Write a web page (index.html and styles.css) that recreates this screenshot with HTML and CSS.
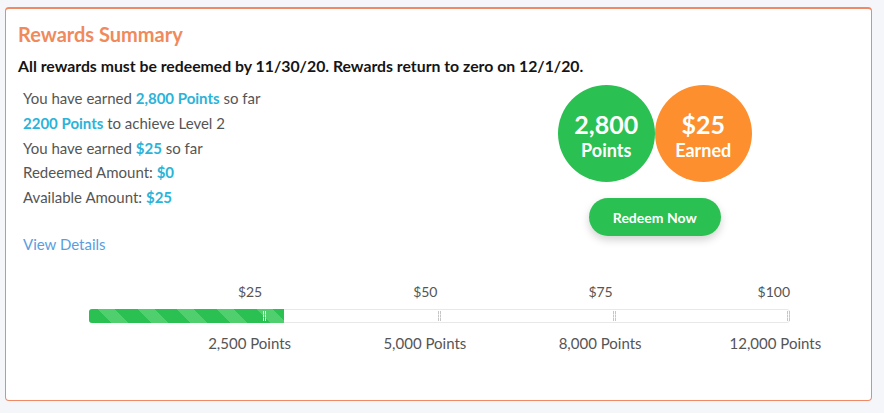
FILE: index.html
```html
<!DOCTYPE html>
<html lang="en">
<head>
<meta charset="utf-8">
<title>Rewards Summary</title>
<link rel="stylesheet" href="styles.css">
</head>
<body>
<section class="card">
  <h2 class="title">Rewards Summary</h2>
  <p class="notice">All rewards must be redeemed by 11/30/20. Rewards return to zero on 12/1/20.</p>
  <div class="content">
    <div class="info">
      <ul class="facts">
        <li>You have earned <strong>2,800 Points</strong> so far</li>
        <li><strong>2200 Points</strong> to achieve Level 2</li>
        <li>You have earned <strong>$25</strong> so far</li>
        <li>Redeemed Amount: <strong>$0</strong></li>
        <li>Available Amount: <strong>$25</strong></li>
      </ul>
      <a class="details" href="#">View Details</a>
    </div>
    <div class="summary">
      <div class="badges">
        <div class="badge badge-green"><span class="big">2,800</span><span class="small">Points</span></div>
        <div class="badge badge-orange"><span class="big">$25</span><span class="small">Earned</span></div>
      </div>
      <button class="redeem" type="button">Redeem Now</button>
    </div>
  </div>
  <div class="progress">
    <div class="labels dollars">
      <span>$25</span><span>$50</span><span>$75</span><span>$100</span>
    </div>
    <div class="bar">
      <div class="fill" style="width: 195px"></div>
      <i class="tick tick-1 on-fill"></i>
      <i class="tick tick-2"></i>
      <i class="tick tick-3"></i>
      <i class="tick tick-4"></i>
    </div>
    <div class="labels points">
      <span>2,500 Points</span><span>5,000 Points</span><span>8,000 Points</span><span>12,000 Points</span>
    </div>
  </div>
</section>
</body>
</html>
```

FILE: styles.css
```css
* { box-sizing: border-box; }

html, body {
  margin: 0;
  background: #f5f6fa;
}

body {
  padding: 7px 12px 0 5px;
  font-family: Lato, "Liberation Sans", sans-serif;
  color: #555;
}

.card {
  background: #fff;
  border: 1px solid #ef8a66;
  border-top-width: 2px;
  border-radius: 4px;
  height: 394px;
  padding: 13px 12px 0 12px;
}

.title {
  margin: 0;
  font-size: 20px;
  line-height: 24px;
  font-weight: 700;
  color: #f08a5d;
}

.notice {
  margin: 10px 0 0;
  font-size: 15.8px;
  line-height: 20px;
  font-weight: 700;
  color: #151515;
}

.content {
  display: grid;
  grid-template-columns: 1fr 1fr;
}

.info {
  padding: 10px 0 0 5px;
}

.facts {
  list-style: none;
  margin: 0;
  padding: 0;
  font-size: 15px;
  line-height: 24.75px;
}

.facts strong {
  color: #2bb3d9;
  font-weight: 700;
}

.details {
  display: block;
  margin-top: 22px;
  font-size: 15px;
  line-height: 25px;
  color: #5a9ee0;
  text-decoration: none;
}

.summary {
  display: flex;
  flex-direction: column;
  align-items: center;
  padding: 9px 0 0 12px;
}

.badges {
  display: flex;
}

.badge {
  width: 97px;
  height: 97px;
  border-radius: 50%;
  display: flex;
  flex-direction: column;
  align-items: center;
  justify-content: center;
  color: #fff;
  font-weight: 700;
  padding-top: 4px;
}

.badge-green { background: #2bc052; }
.badge-orange { background: #fd8f2f; }

.badge .big {
  font-size: 25px;
  line-height: 28px;
}

.badge .small {
  font-size: 18px;
  line-height: 24px;
}

.redeem {
  margin-top: 16px;
  width: 132px;
  height: 38px;
  border: 0;
  border-radius: 19px;
  background: #2bc052;
  color: #fff;
  font-family: Lato, "Liberation Sans", sans-serif;
  font-size: 14px;
  font-weight: 700;
  box-shadow: 0 4px 8px rgba(0, 0, 0, 0.18);
}

.progress {
  margin: 26px 0 0 71px;
  width: 701px;
}

.labels {
  display: grid;
  grid-template-columns: repeat(4, 175.25px);
}

.dollars {
  font-size: 14px;
  line-height: 18px;
  text-align: right;
}

.dollars span { padding-right: 2px; }
.dollars span:last-child { padding-right: 0; }

.points {
  margin-top: 10px;
  padding-left: 73px;
  font-size: 15px;
  line-height: 20px;
  text-align: center;
  width: 780px;
}

.bar {
  position: relative;
  margin-top: 8px;
  height: 14px;
  border: 1px solid #e8e8e8;
  border-radius: 3px;
  background: #fff;
}

.fill {
  height: 14px;
  margin: -1px 0 0 -1px;
  border-radius: 3px 0 0 3px;
  background: repeating-linear-gradient(45deg, #2bc052 0, #2bc052 16px, #50cf6f 16px, #50cf6f 28px);
}

.tick {
  position: absolute;
  top: 1px;
  bottom: 1px;
  width: 3px;
  border-left: 1px dashed #c6c6c6;
  border-right: 1px dashed #c6c6c6;
}

.tick.on-fill {
  border-color: #e4f8e8;
}

.tick-1 { left: 173px; }
.tick-2 { left: 348px; }
.tick-3 { left: 523px; }
.tick-4 { left: 697px; }
```
